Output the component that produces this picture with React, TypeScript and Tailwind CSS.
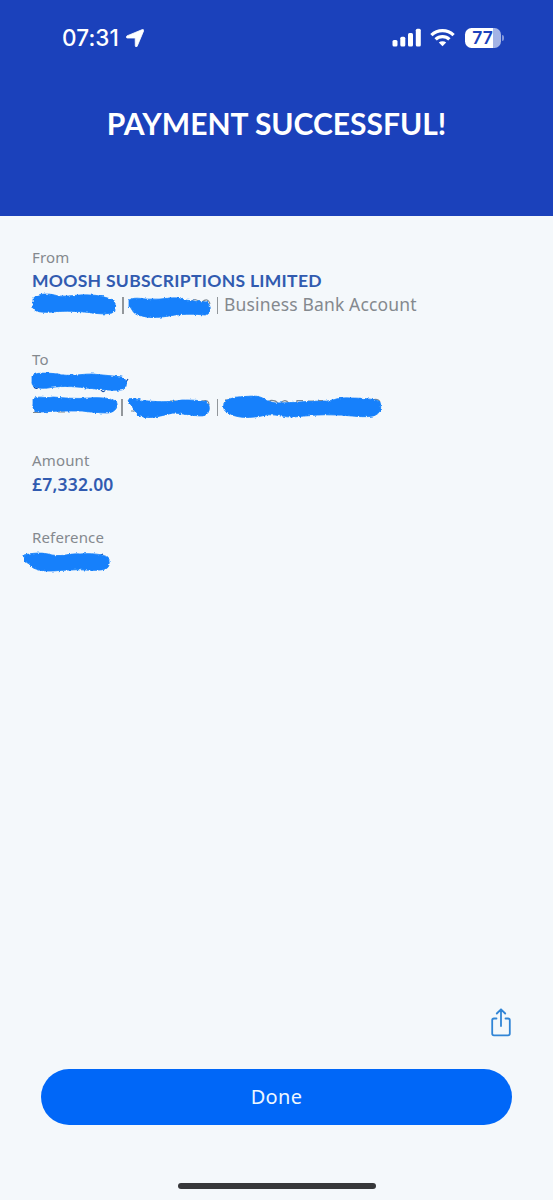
import React from 'react';

interface ScribbleProps {
  viewBox: string;
  className: string;
  d: string;
  traces?: string;
  traceColor?: string;
}

// Marker stroke that hides a private value, with a few bits of the text still showing
const Scribble: React.FC<ScribbleProps> = ({ viewBox, className, d, traces, traceColor = '#7d8790' }) => (
  <svg viewBox={viewBox} className={`block shrink-0 overflow-visible ${className}`} aria-hidden="true">
    {traces && <path d={traces} fill="none" stroke={traceColor} strokeWidth="1.2" />}
    <path d={d} fill="#1480fb" stroke="#1480fb" strokeWidth="0.8" filter="url(#marker-edge)" />
  </svg>
);

const Divider = ({ className }: { className: string }) => (
  <span className={`block h-[17px] w-[1.5px] shrink-0 bg-[#92979b] ${className}`} />
);

const Label = ({ children }: { children: React.ReactNode }) => (
  <div className="h-5 text-[15px] leading-[18px] tracking-[0.15px] text-[#84898e]">{children}</div>
);

const StatusBar = () => (
  <div className="flex h-[75px] items-center justify-between pl-[62px] pr-[49px]">
    <div className="flex items-center">
      <span className="mt-[2px] w-[62px] whitespace-nowrap font-['Inter',sans-serif] text-[22.5px] font-medium leading-none tracking-[0.1px]">07:31</span>
      <svg viewBox="0 0 18 18" className="ml-[2px] h-[18px] w-[18px]" fill="#fff" stroke="#fff" strokeWidth="0.8">
        <path d="M16.3.6.9 6.9C-.1 7.5.1 8.9 1.2 9H8.600Q9.200 9 9.200 9.600L9.300 16.800C9.400 18 10.700 18.300 11.200 17.200L17.600 1.900C18 .9 17.300.200 16.300.600Z" />
      </svg>
    </div>
    <div className="flex items-center">
      <svg viewBox="0 0 29 19" className="h-[19px] w-[29px]" fill="#fff">
        <rect x="0.500" y="12" width="5" height="6.500" rx="1.500" />
        <rect x="8.300" y="8.800" width="5" height="9.700" rx="1.500" />
        <rect x="16" y="5" width="5" height="13.500" rx="1.500" />
        <rect x="23.800" y="0.800" width="5" height="17.700" rx="1.500" />
      </svg>
      <svg viewBox="0 0 25 19" className="ml-[9px] h-[19px] w-[25px]" fill="none" stroke="#fff" strokeWidth="3.300">
        <path d="M1.400 7.100a16 16 0 0 1 22.200 0" />
        <path d="M5.600 11.400a10 10 0 0 1 13.800 0" />
        <path d="M12.500 18.300 8.800 14.600a5.400 5.400 0 0 1 7.400 0Z" fill="#fff" stroke="none" />
      </svg>
      <div className="ml-[10px] flex items-center">
        <div className="flex h-5 w-9 items-center justify-center rounded-[6.500px] bg-linear-to-r from-white from-[78%] to-[#a3b3e5] to-[78%] font-['Inter',sans-serif] text-[17.500px] font-semibold leading-none text-[#1b41bb]">
          77
        </div>
        <span className="ml-[1.500px] h-[6px] w-[2px] rounded-r-full bg-[#8498da]" />
      </div>
    </div>
  </div>
);

export default function App() {
  return (
    <div className="flex h-[1200px] w-[553px] flex-col bg-[#f4f8fb] font-['Noto_Sans',sans-serif]">
      <svg className="absolute h-0 w-0">
        <filter id="marker-edge" x="-10%" y="-30%" width="120%" height="160%">
          <feTurbulence type="fractalNoise" baseFrequency="0.35" numOctaves="2" seed="4" />
          <feDisplacementMap in="SourceGraphic" scale="3" xChannelSelector="R" yChannelSelector="G" />
          <feGaussianBlur stdDeviation="0.35" />
        </filter>
      </svg>

      <header className="h-[216px] shrink-0 bg-[#1b41bb] text-white">
        <StatusBar />
        <h1 className="mt-[28px] text-center font-['Lato',sans-serif] text-[30px] font-bold leading-10">PAYMENT SUCCESSFUL!</h1>
      </header>

      <main className="flex flex-1 flex-col pl-8 pt-8">
        <section>
          <Label>From</Label>
          <div className="h-[25px] whitespace-nowrap font-['Lato',sans-serif] text-[17.5px] font-bold leading-[25px] tracking-[0.3px] text-[#315bb0]">MOOSH SUBSCRIPTIONS LIMITED</div>
          <div className="flex h-[25px] items-center text-[17.5px] text-[#84898e]">
            <Scribble
              viewBox="32 293 84 25"
              className="h-[25px] w-[84px]"
              d="M33 299C36 293 50 293 58 296C69 297 78 294 90 295C98 295 104 297 111 299C117 302 117 310 112 313C103 315 94 313 84 312C73 311 61 311 53 312C43 313 33 312 33 307Z"
            />
            <Divider className="ml-[6px]" />
            <Scribble
              viewBox="127 293 84 25"
              className="ml-[4px] h-[25px] w-[84px]"
              d="M128 300C135 296 143 300 151 299C161 300 167 297 177 298C184 301 196 301 206 302C211 306 210 315 204 315C193 314 186 314 174 315C162 317 151 319 141 316C131 315 132 309 128 306Z"
              traces="M190 302Q194 297 198 302M201 302Q207 297 209 304"
            />
            <Divider className="ml-[5px]" />
            <span className="-mt-[2px] ml-[6px] whitespace-nowrap tracking-[0.15px]">Business Bank Account</span>
          </div>
        </section>

        <section className="mt-8">
          <Label>To</Label>
          <div className="flex h-[25px] items-center">
            <Scribble
              viewBox="32 370 96 25"
              className="h-[25px] w-[96px]"
              d="M32 376C36 372 49 373 58 374C69 377 80 374 92 374C103 375 114 376 122 377C129 380 127 390 121 390C109 391 97 389 86 388C72 386 58 386 48 388C37 389 31 387 32 381Z"
              traces="M34 387q3 3 5-.5M101 390q2 3 4 .5M126 382l2-3"
              traceColor="#16469f"
            />
          </div>
          <div className="flex h-[25px] items-center">
            <Scribble
              viewBox="32 395 86 25"
              className="h-[25px] w-[86px]"
              d="M33 399C38 395 45 399 53 397C65 398 77 399 89 398C99 397 109 398 116 401C119 406 116 412 108 413C98 413 90 412 82 411C68 411 53 411 42 412C35 413 32 409 33 404Z"
              traces="M33 412.5h8M58 412h7"
            />
            <Divider className="ml-[3px]" />
            <Scribble
              viewBox="127 395 82 25"
              className="ml-[5px] h-[25px] w-[82px]"
              d="M127 399C133 397 139 401 147 401C159 402 172 402 181 400C190 400 202 400 207 403C210 409 208 415 201 416C190 416 180 413 172 413C163 415 151 419 142 417C132 415 135 408 128 404Z"
              traces="M130 411h4M169 401h6M201 401Q208 399 208 405"
            />
            <Divider className="ml-[7px]" />
            <Scribble
              viewBox="223 395 159 25"
              className="ml-[5px] h-[25px] w-[159px]"
              d="M224 403C228 396 241 397 253 396C264 396 266 402 276 403C291 403 306 401 323 401C334 402 334 397 350 398C362 398 377 399 380 402C382 409 380 414 373 416C362 418 348 415 336 415C320 414 307 416 293 417C282 417 276 414 266 415C251 419 235 418 229 413C224 412 223 408 224 403Z"
              traces="M226 403v-4M270 404v-3.500q6-.5 8 3M281 403q4-5 8 .500M297 403v-2.500h6M308 401h6M318 400.500h5M372 400q6-2 8 2"
            />
          </div>
        </section>

        <section className="mt-[31px]">
          <Label>Amount</Label>
          <div className="h-[25px] text-[17.5px] font-semibold leading-[26px] tracking-[0.2px] text-[#315bb0]">£7,332.00</div>
        </section>

        <section className="mt-8">
          <Label>Reference</Label>
          <Scribble
            viewBox="24 549 86 25"
            className="-ml-2 mt-px h-[25px] w-[86px]"
            d="M24 555C32 553 42 552 52 555C64 557 70 553 80 554C91 553 101 554 108 557C110 562 110 568 105 569C96 572 83 569 71 570C58 570 46 573 36 569C29 567 32 564 25 562Z"
            traces="M33 566h2M101 555l2-1"
            traceColor="#16469f"
          />
        </section>
      </main>

      <footer className="flex h-[192px] shrink-0 flex-col px-[41px]">
        <button className="mr-px self-end" aria-label="Share">
          <svg
            viewBox="0 0 20 29"
            className="h-[29px] w-5"
            fill="none"
            stroke="#3185d6"
            strokeWidth="1.800"
            strokeLinecap="round"
            strokeLinejoin="round"
          >
            <path d="M5.500 10.500H3Q1.200 10.500 1.200 12.300V25.500Q1.200 27.300 3 27.300H17Q18.800 27.300 18.800 25.500V12.300Q18.800 10.500 17 10.500H14.500" />
            <path d="M10 18V1.300M5.800 5.500 10 1.300 14.200 5.500" />
          </svg>
        </button>
        <button className="mt-8 h-[56px] w-full shrink-0 rounded-full bg-[#0067f8] text-[20px] tracking-[0.3px] text-[#edf7ff]">Done</button>
        <div className="mt-[58px] h-[6px] w-[198px] shrink-0 self-center rounded-full bg-[#36373a]" />
      </footer>
    </div>
  );
}
